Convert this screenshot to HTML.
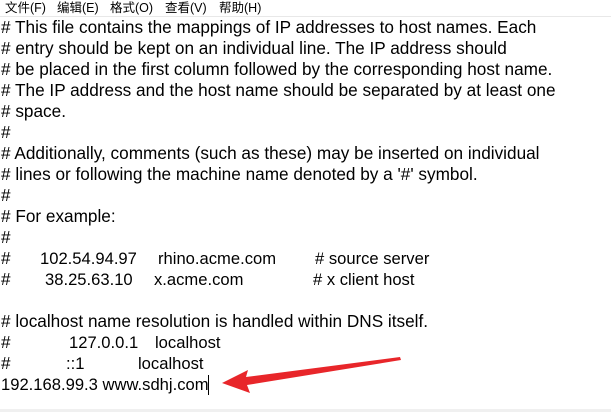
<html><head><style>
body{margin:0;width:611px;height:412px;background:#fff;overflow:hidden;position:relative;font-family:"Liberation Sans","Noto Sans CJK SC",sans-serif;color:#000}
.m{position:absolute;top:0;font-size:12.5px;line-height:16px}
.sep{position:absolute;top:16px;left:0;width:611px;height:1px;background:#e8e8e8}
.l{position:absolute;left:1px;font-size:17.2px;line-height:21px;white-space:pre}
.s{position:absolute;font-size:16.6px;line-height:21px;white-space:pre}
.n{font-size:16.6px}
</style></head><body>
<div class="m" style="left:5px">文件(F)</div>
<div class="m" style="left:57px">编辑(E)</div>
<div class="m" style="left:110px">格式(O)</div>
<div class="m" style="left:165px">查看(V)</div>
<div class="m" style="left:219px">帮助(H)</div>
<div class="sep"></div>
<div class="l" style="top:17px"># This file contains the mappings of IP addresses to host names. Each</div>
<div class="l" style="top:38px"># entry should be kept on an individual line. The IP address should</div>
<div class="l" style="top:59px"># be placed in the first column followed by the corresponding host name.</div>
<div class="l" style="top:80px"># The IP address and the host name should be separated by at least one</div>
<div class="l" style="top:101px"># space.</div>
<div class="l" style="top:122px">#</div>
<div class="l" style="top:143px"># Additionally, comments (such as these) may be inserted on individual</div>
<div class="l" style="top:164px"># lines or following the machine name denoted by a '#' symbol.</div>
<div class="l" style="top:185px">#</div>
<div class="l" style="top:206px"># For example:</div>
<div class="l" style="top:227px">#</div>
<div class="l" style="top:248px">#</div><div class="s" style="top:248px;left:40px">102.54.94.97</div><div class="s" style="top:248px;left:158px">rhino.acme.com</div><div class="s" style="top:248px;left:315px"># source server</div>
<div class="l" style="top:269px">#</div><div class="s" style="top:269px;left:45px">38.25.63.10</div><div class="s" style="top:269px;left:154px">x.acme.com</div><div class="s" style="top:269px;left:313px"># x client host</div>
<div class="l" style="top:311px"># localhost name resolution is handled within DNS itself.</div>
<div class="l" style="top:332px">#</div><div class="s" style="top:332px;left:69px">127.0.0.1</div><div class="s" style="top:332px;left:155px">localhost</div>
<div class="l" style="top:353px">#</div><div class="s" style="top:353px;left:66px">::1</div><div class="s" style="top:353px;left:138px">localhost</div>
<div class="l n" style="top:374px">192.168.99.3 www.sdhj.com</div>
<div style="position:absolute;left:208px;top:375px;width:1px;height:20px;background:#000"></div>
<svg style="position:absolute;left:0;top:0" width="611" height="412">
<polygon points="400,357 246,377 248,370 222,383 250,393 247,385 401,360" fill="#e8262a"/>
<rect x="0" y="409" width="611" height="3" fill="#f0f0f0"/>
</svg>
</body></html>
